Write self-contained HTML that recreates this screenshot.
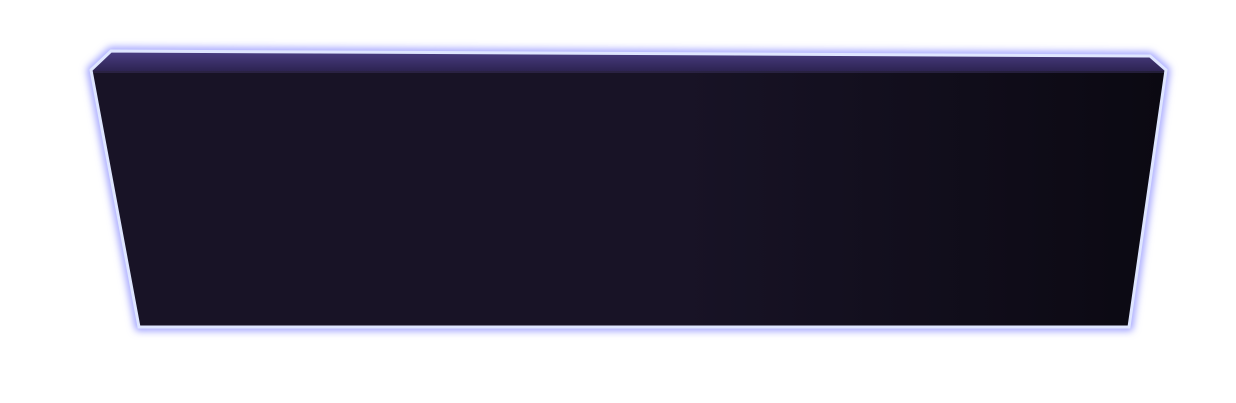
<!DOCTYPE html>
<html><head><style>html,body{margin:0;padding:0;background:#fff;width:1236px;height:403px;overflow:hidden}</style></head>
<body>
<svg width="1236" height="403" viewBox="0 0 1236 403" xmlns="http://www.w3.org/2000/svg">
<defs>
<filter id="g" x="-10%" y="-20%" width="120%" height="140%">
<feGaussianBlur stdDeviation="4"/>
</filter>
<linearGradient id="front" x1="0" x2="1" y1="0" y2="0">
<stop offset="0" stop-color="#181326"/>
<stop offset="0.55" stop-color="#181326"/>
<stop offset="1" stop-color="#0b0912"/>
</linearGradient>
<linearGradient id="top" x1="0" x2="0" y1="0" y2="1">
<stop offset="0" stop-color="#4a3d82"/>
<stop offset="1" stop-color="#2d2452"/>
</linearGradient>
</defs>
<path d="M91,70 L111,51 L1150,56 L1166,70 L1129,327 L139,327 Z" fill="none" stroke="#8e90ff" stroke-width="7" filter="url(#g)"/>
<path d="M91,70 L111,51 L1150,56 L1166,70 L1129,327 L139,327 Z" fill="url(#front)"/>
<path d="M92,71 L111,52 L1150,57 L1165,71 Z" fill="url(#top)"/>
<path d="M92,72 L1165,72" stroke="#3b3260" stroke-width="1"/>
<path d="M91,70 L111,51 L1150,56 L1166,70 L1129,327 L139,327 Z" fill="none" stroke="#dfe6ff" stroke-width="3"/>
</svg>
</body></html>
